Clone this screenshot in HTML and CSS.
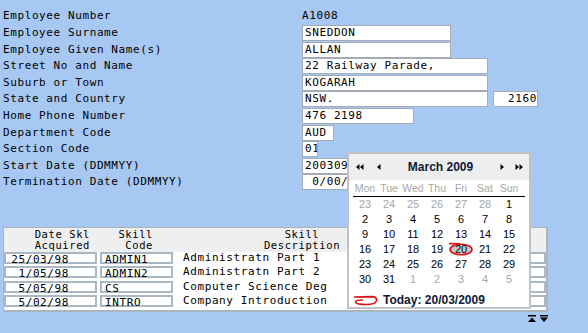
FILE: index.html
```html
<!DOCTYPE html>
<html>
<head>
<meta charset="utf-8">
<link rel="stylesheet" href="styles.css">
</head>
<body>
<div class="page">
  <div class="form">
    <div class="lbl">Employee Number</div><div class="val"><span class="plain">A1008</span></div>
    <div class="lbl">Employee Surname</div><div class="val"><div class="fld w149">SNEDDON</div></div>
    <div class="lbl">Employee Given Name(s)</div><div class="val"><div class="fld w149">ALLAN</div></div>
    <div class="lbl">Street No and Name</div><div class="val"><div class="fld w186">22 Railway Parade,</div></div>
    <div class="lbl">Suburb or Town</div><div class="val"><div class="fld w186">KOGARAH</div></div>
    <div class="lbl">State and Country</div><div class="val"><div class="fld w186">NSW.</div><div class="fld w45 right">2160</div></div>
    <div class="lbl">Home Phone Number</div><div class="val"><div class="fld w112">476 2198</div></div>
    <div class="lbl">Department Code</div><div class="val"><div class="fld w32">AUD</div></div>
    <div class="lbl">Section Code</div><div class="val"><div class="fld w16">01</div></div>
    <div class="lbl">Start Date (DDMMYY)</div><div class="val"><div class="fld w70">200309</div></div>
    <div class="lbl">Termination Date (DDMMYY)</div><div class="val"><div class="fld w70">&nbsp;0/00/</div></div>
  </div>

  <div class="skills">
    <div class="shead">
      <div class="hc hdate">Date Skl<br>Acquired</div>
      <div class="hc hcode">Skill<br>Code</div>
      <div class="hc hdesc">Skill<br>Description</div>
      <div class="hc"></div>
    </div>
    <div class="srow">
      <div class="box bdate">25/03/98</div><div class="box bcode">ADMIN1</div><div class="desc">Administratn Part 1</div><div class="box blast"></div>
    </div>
    <div class="srow">
      <div class="box bdate">1/05/98</div><div class="box bcode">ADMIN2</div><div class="desc">Administratn Part 2</div><div class="box blast"></div>
    </div>
    <div class="srow">
      <div class="box bdate">5/05/98</div><div class="box bcode">CS</div><div class="desc">Computer Science Deg</div><div class="box blast"></div>
    </div>
    <div class="srow">
      <div class="box bdate">5/02/98</div><div class="box bcode">INTRO</div><div class="desc">Company Introduction</div><div class="box blast"></div>
    </div>
  </div>

  <div class="pager">
    <svg width="8" height="7" viewBox="0 0 8 7"><rect x="0" y="0" width="8" height="1.5" fill="#000"/><polygon points="0,7 4,2.5 8,7" fill="#000"/></svg>
    <svg width="8" height="7" viewBox="0 0 8 7"><rect x="0" y="0" width="8" height="1.5" fill="#000"/><polygon points="0,2.5 8,2.5 4,7" fill="#000"/></svg>
  </div>
</div>

<div class="cal">
  <div class="cal-head">
    <svg class="nav dl" width="8" height="6" viewBox="0 0 8 6"><polygon points="0,3 3.5,0 3.5,6" fill="#000"/><polygon points="4,3 7.5,0 7.5,6" fill="#000"/></svg>
    <svg class="nav sl" width="4" height="6" viewBox="0 0 4 6"><polygon points="0,3 3.5,0 3.5,6" fill="#000"/></svg>
    <div class="cal-title">March 2009</div>
    <svg class="nav sr" width="4" height="6" viewBox="0 0 4 6"><polygon points="4,3 0.5,0 0.5,6" fill="#000"/></svg>
    <svg class="nav dr" width="8" height="6" viewBox="0 0 8 6"><polygon points="4,3 0.5,0 0.5,6" fill="#000"/><polygon points="8,3 4.5,0 4.5,6" fill="#000"/></svg>
  </div>
  <div class="cal-days">
    <div>Mon</div><div>Tue</div><div>Wed</div><div>Thu</div><div>Fri</div><div>Sat</div><div>Sun</div>
  </div>
  <div class="cal-grid">
    <div class="o">23</div><div class="o">24</div><div class="o">25</div><div class="o">26</div><div class="o">27</div><div class="o">28</div><div>1</div>
    <div>2</div><div>3</div><div>4</div><div>5</div><div>6</div><div>7</div><div>8</div>
    <div>9</div><div>10</div><div>11</div><div>12</div><div>13</div><div>14</div><div>15</div>
    <div>16</div><div>17</div><div>18</div><div>19</div>
    <div class="today"><svg class="ring" width="26" height="14" viewBox="0 0 26 14"><ellipse cx="13" cy="7.5" rx="11" ry="5.3" fill="#c8c8c8" stroke="#e01010" stroke-width="1.6"/><path d="M1 1.6 L12 1.8" stroke="#e01010" stroke-width="1.6" fill="none"/></svg><span>20</span></div>
    <div>21</div><div>22</div>
    <div>23</div><div>24</div><div>25</div><div>26</div><div>27</div><div>28</div><div>29</div>
    <div>30</div><div>31</div><div class="o">1</div><div class="o">2</div><div class="o">3</div><div class="o">4</div><div class="o">5</div>
  </div>
  <div class="cal-today">
    <svg width="25" height="11" viewBox="0 0 25 11"><path d="M1 2 L19 1.6 Q24 1.6 23.5 5.5 Q23 9.5 13 9.5 Q3 9.5 2.5 7 Q2.5 5 10 5" stroke="#e01010" stroke-width="1.6" fill="none"/></svg>
    <span>Today: 20/03/2009</span>
  </div>
</div>
</body>
</html>
```

FILE: styles.css
```css
html, body {
  margin: 0;
  padding: 0;
}
body {
  background: #a8c8f4;
  width: 588px;
  height: 333px;
  overflow: hidden;
  position: relative;
  font-family: "DejaVu Sans Mono", "Liberation Mono", monospace;
  font-size: 11px;
  letter-spacing: 0.6px;
  color: #000;
}
.page {
  padding: 8px 0 0 3px;
}
.form {
  display: grid;
  grid-template-columns: 299px auto;
  grid-auto-rows: 16.6px;
  padding-top: 0.4px;
}
.lbl {
  line-height: 16px;
  white-space: pre;
}
.val {
  display: flex;
  gap: 5px;
  align-items: flex-start;
}
.plain {
  line-height: 16px;
}
.fld {
  box-sizing: border-box;
  height: 16px;
  border: 1px solid #a3acb6;
  background: #fff;
  line-height: 14px;
  padding-left: 2px;
  white-space: pre;
  overflow: hidden;
}
.fld.right {
  text-align: right;
  padding-left: 0;
  padding-right: 0;
}
.w149 { width: 149px; }
.w186 { width: 186px; }
.w45 { width: 45px; }
.w112 { width: 112px; }
.w32 { width: 32px; }
.w16 { width: 16px; }
.w70 { width: 70px; }

.skills {
  margin-top: 35.6px;
  width: 545px;
  box-sizing: border-box;
  border: 1px solid #a9b6c0;
  border-right-width: 2px;
  border-bottom-width: 2px;
  background: #fff;
}
.shead {
  display: grid;
  grid-template-columns: 93px 3px 73px 1fr 17px;
  background: #efefef;
  height: 24px;
  line-height: 11px;
  padding-top: 1px;
  font-size: 10.5px;
  box-sizing: border-box;
}
.hc {
  white-space: pre;
}
.hdate {
  grid-column: 1;
  text-align: right;
  padding-right: 7px;
}
.hcode {
  grid-column: 3;
  text-align: right;
  padding-right: 20px;
}
.hdesc {
  grid-column: 4;
  text-align: center;
  padding-right: 98px;
}
.srow {
  display: grid;
  grid-template-columns: 93px 3px 73px 1fr 17px;
  height: 14.5px;
}
.box {
  box-sizing: border-box;
  height: 12px;
  border: 2px solid #a9b8c2;
  background: #fff;
  line-height: 12px;
  white-space: pre;
}
.bdate {
  grid-column: 1;
  text-align: right;
  padding-right: 26px;
}
.bcode {
  grid-column: 3;
  padding-left: 3px;
}
.desc {
  grid-column: 4;
  line-height: 10px;
  padding: 1px 0 0 10px;
  white-space: pre;
}
.blast {
  grid-column: 5;
}

.pager {
  width: 545px;
  display: flex;
  justify-content: flex-end;
  gap: 4px;
  margin-top: 3px;
}

/* calendar popup */
.cal {
  position: absolute;
  left: 347px;
  top: 152px;
  width: 184px;
  height: 157px;
  box-sizing: border-box;
  border: 2px solid #c2c2c2;
  background: #fff;
  font-family: "Liberation Sans", Arial, sans-serif;
  font-size: 11px;
  letter-spacing: 0;
}
.cal-head {
  height: 26px;
  background: #eeeeee;
  display: flex;
  align-items: center;
  padding: 0 6px 0 7px;
}
.nav.sl { margin-left: 13px; }
.nav.dr { margin-left: 11px; }
.cal-title {
  flex: 1;
  text-align: center;
  font-weight: bold;
  font-size: 12px;
  color: #0e1a36;
}
.cal-days {
  margin: 1px 4px 0 4px;
  display: grid;
  grid-template-columns: repeat(7, 24px);
  line-height: 15px;
  border-bottom: 1px solid #000;
  text-align: center;
  color: #a6a6a6;
  font-size: 10.5px;
}
.cal-grid {
  margin: 0 4px;
  display: grid;
  grid-template-columns: repeat(7, 24px);
  grid-auto-rows: 15px;
  line-height: 15px;
  text-align: center;
  color: #000;
}
.cal-grid .o {
  color: #a6a6a6;
}
.today {
  position: relative;
}
.today .ring {
  position: absolute;
  left: -1px;
  top: 0;
}
.today span {
  position: relative;
}
.cal-today {
  margin: 6px 0 0 4px;
  height: 14px;
  display: flex;
  align-items: center;
  gap: 5px;
  font-weight: bold;
  font-size: 12px;
  color: #0e1a36;
}
```
